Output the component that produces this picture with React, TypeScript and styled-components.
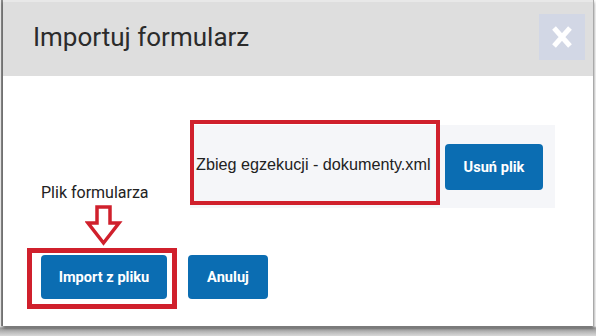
import React from "react";
import styled, { createGlobalStyle } from "styled-components";

const Global = createGlobalStyle`
  html, body { margin: 0; padding: 0; background: #ffffff; }
  body { width: 596px; height: 336px; overflow: hidden; font-family: Roboto, "Liberation Sans", sans-serif; }
  * { box-sizing: border-box; }
`;

const Page = styled.div`
  width: 596px;
  height: 336px;
  padding-left: 3px;
  background: linear-gradient(to bottom, #ffffff 0, #ffffff 326px, #9a9a9a 328px, #d8d8d8 336px);
`;

const Dialog = styled.div`
  width: 591px;
  height: 326px;
  background: #ffffff;
  border-right: 1px solid #a9a9a9;
  box-shadow: -2px 0 1px rgba(0, 0, 0, 0.45), 0 2px 3px rgba(0, 0, 0, 0.5);
  display: flex;
  flex-direction: column;
`;

const Header = styled.div`
  height: 76px;
  background: #dedede;
  border-top: 2px solid #e8e8e8;
  display: flex;
  align-items: center;
  justify-content: space-between;
  padding: 0 8px 0 30px;
`;

const Title = styled.h1`
  margin: 0 0 4px 0;
  font-family: Roboto, "Liberation Sans", sans-serif;
  font-weight: 400;
  font-size: 26px;
  color: #2b2b2b;
`;

const CloseButton = styled.button`
  width: 46px;
  height: 46px;
  border: none;
  padding: 0;
  margin-bottom: 4px;
  background: #d2d7e5;
  display: flex;
  align-items: center;
  justify-content: center;
`;

const Body = styled.div`
  padding-top: 49px;
  display: flex;
  flex-direction: column;
`;

const FileRow = styled.div`
  display: flex;
  align-items: flex-end;
`;

const LabelCol = styled.div`
  width: 187px;
  padding: 0 0 6px 38px;
`;

const Label = styled.span`
  font-family: Roboto, "Liberation Sans", sans-serif;
  font-size: 16px;
  line-height: 19px;
  color: #222;
`;

const FileArea = styled.div`
  width: 365px;
  height: 83px;
  background: #f5f6f9;
  display: flex;
  align-items: center;
`;

const FileName = styled.div`
  align-self: flex-start;
  margin-top: -5px;
  width: 250px;
  height: 85px;
  border: 4px solid #d0202c;
  display: flex;
  align-items: center;
  padding: 4px 0 0 2px;
  font-family: "Liberation Sans", Arial, sans-serif;
  font-size: 16.2px;
  color: #222;
  white-space: nowrap;
`;

const Button = styled.button<{ $w: number }>`
  width: ${(p) => p.$w}px;
  height: 44px;
  border: none;
  border-radius: 4px;
  background: #0b6db2;
  color: #ffffff;
  font-family: Roboto, "Liberation Sans", sans-serif;
  font-weight: 700;
  font-size: 14.6px;
  padding: 0;
`;

const FileButton = styled(Button)`
  height: 46px;
  margin-left: 5px;
`;

const ArrowWrap = styled.div`
  margin: -3px 0 0 82px;
  height: 40px;
`;

const ButtonRow = styled.div`
  display: flex;
  align-items: flex-start;
  padding-left: 24px;
  margin-top: 3px;
`;

const Highlight = styled.div`
  border: 5px solid #d0202c;
  padding: 2px 5px 5px 9px;
`;

const SecondButton = styled(Button)`
  margin: 7px 0 0 11px;
`;

export default function App() {
  return (
    <>
      <Global />
      <Page>
        <Dialog>
          <Header>
            <Title>Importuj formularz</Title>
            <CloseButton aria-label="Zamknij">
              <svg width="20" height="22" viewBox="0 0 20 22">
                <path d="M2 2 L18 20 M18 2 L2 20" stroke="#ffffff" strokeWidth="5" fill="none" />
              </svg>
            </CloseButton>
          </Header>
          <Body>
            <FileRow>
              <LabelCol>
                <Label>Plik formularza</Label>
              </LabelCol>
              <FileArea>
                <FileName>Zbieg egzekucji - dokumenty.xml</FileName>
                <FileButton $w={98}>Usuń plik</FileButton>
              </FileArea>
            </FileRow>
            <ArrowWrap>
              <svg width="38" height="41" viewBox="0 0 38 41">
                <path
                  d="M12 2 H25 V18 H34 L18.5 38 L3 18 H12 Z"
                  fill="#ffffff"
                  stroke="#d0202c"
                  strokeWidth="3.5"
                  strokeLinejoin="miter"
                />
              </svg>
            </ArrowWrap>
            <ButtonRow>
              <Highlight>
                <Button $w={126}>Import z pliku</Button>
              </Highlight>
              <SecondButton $w={80}>Anuluj</SecondButton>
            </ButtonRow>
          </Body>
        </Dialog>
      </Page>
    </>
  );
}
